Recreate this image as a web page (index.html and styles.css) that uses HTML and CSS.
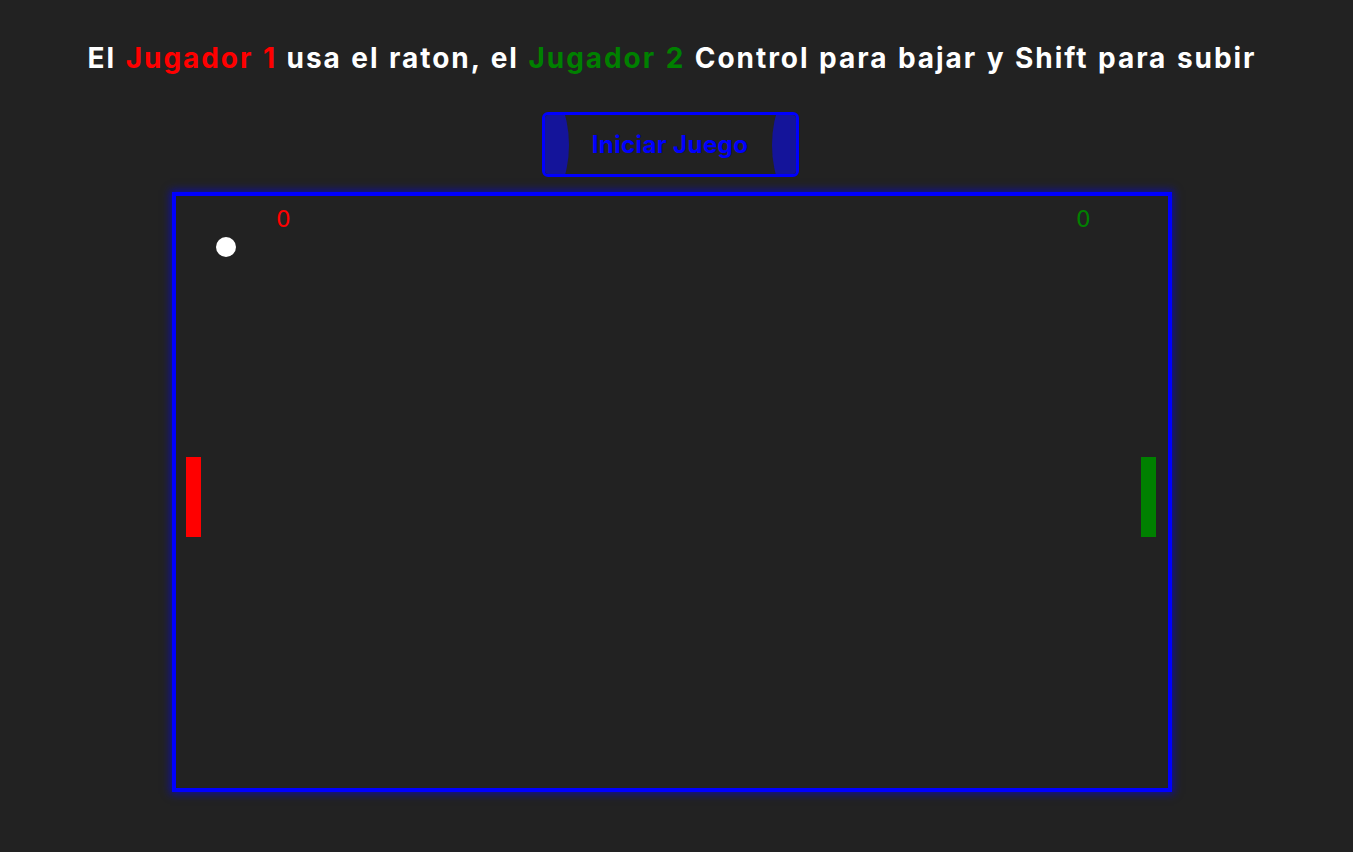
FILE: index.html
```html
<!DOCTYPE html>
<html lang="es">
<head>
<meta charset="utf-8">
<title>Pong</title>
<link rel="stylesheet" href="styles.css">
</head>
<body>
<main class="page">
  <h1 class="title">El <span class="p1">Jugador 1</span> usa el raton, el <span class="p2">Jugador 2</span> Control para bajar y Shift para subir</h1>
  <button class="start" type="button"><span class="start-label">Iniciar Juego</span></button>
  <div class="field">
    <span class="score score-p1">0</span>
    <span class="score score-p2">0</span>
    <span class="ball"></span>
    <span class="paddle paddle-p1"></span>
    <span class="paddle paddle-p2"></span>
  </div>
</main>
</body>
</html>
```
FILE: styles.css
```css
html, body {
  margin: 0;
  padding: 0;
  background: #222222;
  height: 100%;
}
body {
  font-family: Inter, "Open Sans", "Liberation Sans", sans-serif;
  color: #ffffff;
  overflow: hidden;
}
.page {
  display: flex;
  flex-direction: column;
  align-items: center;
  padding: 38px 9px 0 0;
}
.title {
  margin: 0;
  font-size: 28px;
  line-height: 40px;
  font-weight: 700;
  letter-spacing: 1.95px;
  word-spacing: 1px;
  white-space: nowrap;
}
.p1 { color: #ff0000; }
.p2 { color: #008000; }
.start {
  position: relative;
  margin-top: 34px;
  margin-right: 4px;
  width: 257px;
  height: 65px;
  border: 3px solid #0000ff;
  border-radius: 6px;
  background: #222222;
  color: #0000ff;
  font-family: Inter, "Liberation Sans", sans-serif;
  font-size: 24px;
  font-weight: 700;
  letter-spacing: 0.4px;
  overflow: hidden;
  padding: 0;
  cursor: pointer;
}
.start::before,
.start::after {
  content: "";
  position: absolute;
  top: -30px;
  width: 60px;
  height: 120px;
  border-radius: 50%;
  background: #14149a;
}
.start::before { left: -36px; }
.start::after { right: -36px; }
.start-label {
  position: relative;
  z-index: 1;
}
.field {
  position: relative;
  margin-top: 15px;
  width: 1000px;
  height: 600px;
  box-sizing: border-box;
  border: 4px solid #0000ff;
  box-shadow: 0 0 8px 2px rgba(0, 0, 255, 0.55);
}
.score {
  position: absolute;
  top: 9px;
  font-family: "DejaVu Sans", sans-serif;
  font-size: 23px;
  line-height: 28px;
}
.score-p1 { left: 100px; color: #ff0000; }
.score-p2 { left: 900px; color: #008000; }
.ball {
  position: absolute;
  left: 40px;
  top: 41px;
  width: 20px;
  height: 20px;
  border-radius: 50%;
  background: #ffffff;
}
.paddle {
  position: absolute;
  top: 261px;
  width: 15px;
  height: 80px;
}
.paddle-p1 { left: 10px; background: #ff0000; }
.paddle-p2 { left: 965px; background: #008000; }
```
